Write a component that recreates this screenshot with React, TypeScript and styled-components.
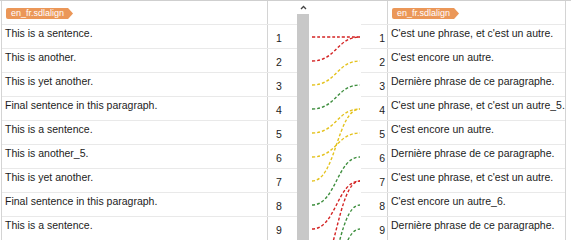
import styled, { createGlobalStyle } from 'styled-components';

type Link = {
  from: number,
  to: number,
  tone: 'red' | 'yellow' | 'green',
};

const GlobalStyle = createGlobalStyle`
  body {
    margin: 0;
    background: #ffffff;
    font-family: "Liberation Sans", Arial, sans-serif;
  }
`;

const source = [
  'This is a sentence.',
  'This is another.',
  'This is yet another.',
  'Final sentence in this paragraph.',
  'This is a sentence.',
  'This is another_5.',
  'This is yet another.',
  'Final sentence in this paragraph.',
  'This is a sentence.',
];

const target = [
  "C'est une phrase, et c'est un autre.",
  "C'est encore un autre.",
  'Dernière phrase de ce paragraphe.',
  "C'est une phrase, et c'est un autre_5.",
  "C'est encore un autre.",
  'Dernière phrase de ce paragraphe.',
  "C'est une phrase, et c'est un autre.",
  "C'est encore un autre_6.",
  'Dernière phrase de ce paragraphe.',
];

const links: Link[] = [
  { from: 1, to: 1, tone: 'red' },
  { from: 2, to: 1, tone: 'red' },
  { from: 3, to: 2, tone: 'yellow' },
  { from: 4, to: 3, tone: 'green' },
  { from: 5, to: 4, tone: 'yellow' },
  { from: 6, to: 5, tone: 'yellow' },
  { from: 7, to: 4, tone: 'yellow' },
  { from: 8, to: 6, tone: 'green' },
  { from: 9, to: 7, tone: 'red' },
  { from: 11, to: 7, tone: 'red' },
  { from: 12, to: 8, tone: 'green' },
  { from: 13, to: 9, tone: 'green' },
];

const toneColor = {
  red: '#d42424',
  yellow: '#e4c21c',
  green: '#3e8e3e',
};

const Frame = styled.div`
  display: flex;
  width: 571px;
  height: 240px;
  box-sizing: border-box;
  border-top: 1px solid #cfcfcf;
  padding-left: 1px;
  overflow: hidden;
  background: #ffffff;
`;

const Pane = styled.div<{ $side: 'left' | 'right' }>`
  display: flex;
  flex-direction: column;
  border-left: ${(p) => (p.$side === 'left' ? '1px solid #d4d4d4' : 'none')};
  border-right: ${(p) => (p.$side === 'right' ? '1px solid #d4d4d4' : 'none')};
`;

const Row = styled.div<{ $side: 'left' | 'right' }>`
  display: grid;
  grid-template-columns: ${(p) => (p.$side === 'left' ? '265px 30px' : '26px 178px')};
  height: 24px;
  flex-shrink: 0;
  box-sizing: border-box;
  border-bottom: 1px solid #e9e9e9;
`;

const TextCell = styled.div<{ $side: 'left' | 'right' }>`
  padding: 2px 0 0 3px;
  font-size: 10.5px;
  line-height: 13px;
  color: #1c1c1c;
  white-space: nowrap;
  border-left: ${(p) => (p.$side === 'right' ? '1px solid #d4d4d4' : 'none')};
`;

const NumCell = styled.div<{ $side: 'left' | 'right' }>`
  display: flex;
  align-items: center;
  justify-content: ${(p) => (p.$side === 'left' ? 'flex-start' : 'flex-end')};
  padding: 2px ${(p) => (p.$side === 'left' ? '0 0 8px' : '2px 0 0')};
  font-size: 10.5px;
  color: #1c1c1c;
  border-left: ${(p) => (p.$side === 'left' ? '1px solid #d4d4d4' : 'none')};
`;

const HeaderCell = styled.div<{ $side: 'left' | 'right' }>`
  padding: 1px 0 0 4px;
  border-left: ${(p) => (p.$side === 'right' ? '1px solid #d4d4d4' : 'none')};
`;

const BlankCell = styled.div<{ $side: 'left' | 'right' }>`
  border-left: ${(p) => (p.$side === 'left' ? '1px solid #d4d4d4' : 'none')};
`;

const Tag = styled.span`
  display: inline-block;
  height: 11px;
  padding: 0 9px 0 5px;
  border-radius: 2px 0 0 2px;
  background: #eb9758;
  clip-path: polygon(0 0, calc(100% - 5px) 0, 100% 50%, calc(100% - 5px) 100%, 0 100%);
  color: #ffffff;
  font-size: 9px;
  line-height: 11px;
`;

const Scrollbar = styled.div`
  display: flex;
  flex-direction: column;
  width: 12px;
  flex-shrink: 0;
`;

const ScrollButton = styled.div`
  height: 13px;
  display: flex;
  align-items: center;
  justify-content: center;
`;

const ScrollThumb = styled.div`
  flex: 1;
  background: #c8c8c8;
`;

const Connectors = styled.svg`
  width: 52px;
  height: 239px;
  flex-shrink: 0;
  display: block;
`;

function rowY(index: number): number {
  return 24 * index + 12;
}

function Side({ side, lines }: { side: 'left' | 'right', lines: string[] }): JSX.Element {
  return (
    <Pane $side={side}>
      <Row $side={side}>
        {side === 'left' ? (
          <>
            <HeaderCell $side={side}><Tag>en_fr.sdlalign</Tag></HeaderCell>
            <BlankCell $side={side} />
          </>
        ) : (
          <>
            <BlankCell $side={side} />
            <HeaderCell $side={side}><Tag>en_fr.sdlalign</Tag></HeaderCell>
          </>
        )}
      </Row>
      {lines.map((line, i) => (
        <Row $side={side} key={`${side}-${i}`}>
          {side === 'left' ? (
            <>
              <TextCell $side={side}>{line}</TextCell>
              <NumCell $side={side}>{i + 1}</NumCell>
            </>
          ) : (
            <>
              <NumCell $side={side}>{i + 1}</NumCell>
              <TextCell $side={side}>{line}</TextCell>
            </>
          )}
        </Row>
      ))}
    </Pane>
  );
}

function App(): JSX.Element {
  return (
    <>
      <GlobalStyle />
      <Frame>
        <Side side="left" lines={source} />
        <Scrollbar>
          <ScrollButton>
            <svg width="7" height="5" viewBox="0 0 7 5">
              <polyline points="1,4 3.5,1.5 6,4" fill="none" stroke="#444" strokeWidth="1.3" />
            </svg>
          </ScrollButton>
          <ScrollThumb />
        </Scrollbar>
        <Connectors viewBox="0 0 52 239">
          {links.map((link) => {
            const y0 = rowY(link.from);
            const y1 = rowY(link.to);
            const d = `M3,${y0} C27,${y0} 28,${y1} 51,${y1}`;
            return (
              <path
                key={`${link.from}-${link.to}`}
                d={d}
                fill="none"
                stroke={toneColor[link.tone]}
                strokeWidth="1.4"
                strokeDasharray="3 2"
              />
            );
          })}
        </Connectors>
        <Side side="right" lines={target} />
      </Frame>
    </>
  );
}

export default App;
